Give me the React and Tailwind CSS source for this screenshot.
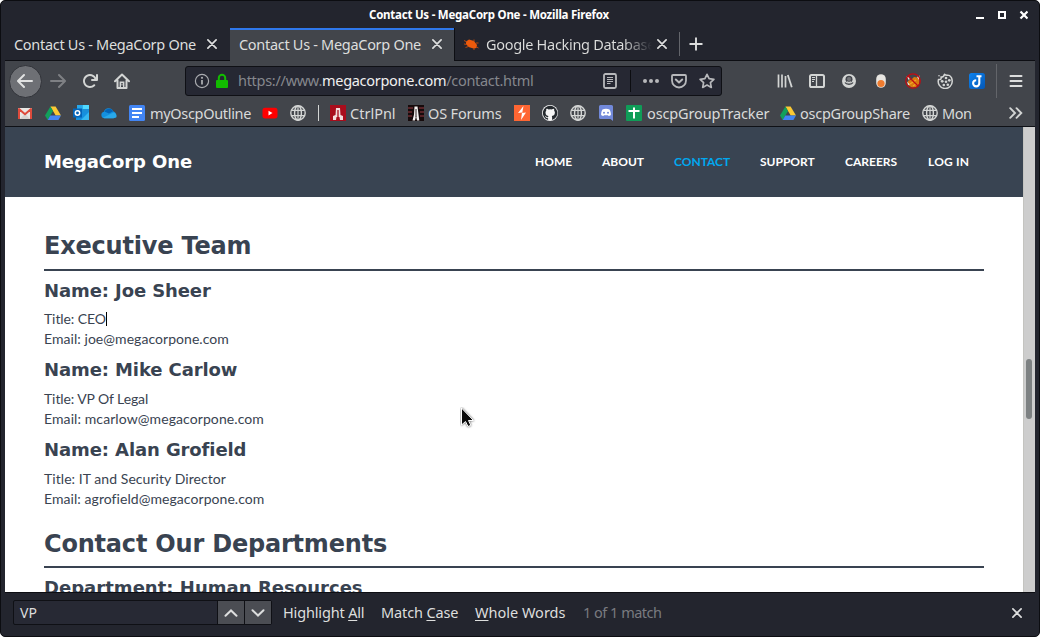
import React from "react";

const light = "#d3d5d4";

function Icon({ size = 16, className = "", children }) {
  return (
    <svg
      width={size}
      height={size}
      viewBox="0 0 16 16"
      fill="none"
      className={"block shrink-0 " + className}
    >
      {children}
    </svg>
  );
}

const BackArrow = ({ className }) => (
  <Icon className={className}>
    <path
      fill="currentColor"
      d="M15 7H3.414l4.293-4.293a1 1 0 0 0-1.414-1.414l-6 6a1 1 0 0 0 0 1.414l6 6a1 1 0 0 0 1.414-1.414L3.414 9H15a1 1 0 0 0 0-2z"
    />
  </Icon>
);

const Reload = () => (
  <Icon>
    <path
      fill={light}
      d="M15 1a1 1 0 0 0-1 1v2.418A6.995 6.995 0 1 0 8 15a6.954 6.954 0 0 0 4.95-2.05 1 1 0 0 0-1.414-1.414A5.019 5.019 0 1 1 12.549 6H10a1 1 0 0 0 0 2h5a1 1 0 0 0 1-1V2a1 1 0 0 0-1-1z"
    />
  </Icon>
);

const Home = () => (
  <Icon>
    <path d="M1 8.3 8 1.5l7 6.8M3.5 7.5V15h9V7.5" stroke={light} strokeWidth="2" strokeLinecap="round" strokeLinejoin="round" />
    <path d="M6.3 15V9.2h3.4V15" stroke={light} strokeWidth="1.4" />
    <path d="M8 10.5v2" stroke={light} strokeWidth="1" />
  </Icon>
);

const Close = ({ size = 10 }) => (
  <svg width={size} height={size} viewBox="0 0 10 10" className="block shrink-0">
    <path d="M.9.9l8.2 8.2M9.1.9.9 9.1" stroke="#dddede" strokeWidth="1.7" strokeLinecap="round" />
  </svg>
);

const Globe = () => (
  <Icon>
    <g stroke={light} strokeWidth="1.4">
      <circle cx="8" cy="8" r="7.2" />
      <ellipse cx="8" cy="8" rx="3.4" ry="7.2" />
      <path d="M1.5 5.4h13M1.5 10.6h13M8 1v14" strokeWidth="1.2" />
    </g>
  </Icon>
);

const Drive = () => (
  <Icon>
    <path d="M5.4 1.5h5.2L16 10.5h-5.3z" fill="#fbc934" />
    <path d="M5.4 1.5 8 6 2.7 15 0 10.5z" fill="#12a05c" />
    <path d="M5.3 10.5H16L13.4 15H2.7z" fill="#4285f4" />
  </Icon>
);

const Gmail = () => (
  <Icon>
    <path d="M1 3h14v11H1z" fill="#e9e7e4" />
    <path d="M2.8 14 8 8.8l5.2 5.2" fill="#d5d2cf" />
    <path d="M2 14V4l6 5.300L14 4v10" stroke="#de4b3c" strokeWidth="2" strokeLinejoin="round" />
  </Icon>
);

const Outlook = () => (
  <Icon>
    <path d="M4 0h12v9H4z" fill="#1a8fd8" />
    <path d="M9.5 0H16v4H9.5z" fill="#50d9ff" />
    <path d="M4 0h5.5v4H4z" fill="#28a8ea" />
    <path d="M3 7.5h13V15H3z" fill="#1590df" />
    <path d="m16 7-8 8h8z" fill="#35b8f1" />
    <path d="M0 3.5h9v9H0z" fill="#0364b8" />
    <circle cx="4.5" cy="8" r="2.2" stroke="#fff" strokeWidth="1.5" />
  </Icon>
);

const OneDrive = () => (
  <Icon>
    <path d="M3.4 13.3a3.3 3.3 0 0 1-.5-6.5A5 5 0 0 1 12.2 6.2 3.7 3.7 0 0 1 12.500 13.3z" fill="#1490df" />
    <path d="M3.4 6.6A5 5 0 0 1 12.2 6.2L8 8.5z" fill="#0364b8" />
    <path d="M2 12.8 12.5 7.5a3.5 3.5 0 0 1 2.7 5l-2.7.8H3.4z" fill="#28a8ea" />
  </Icon>
);

const Docs = () => (
  <Icon>
    <rect width="16" height="16" rx="1.5" fill="#4285f4" />
    <path d="M3 4h10M3 8h10M3 12h7" stroke="#fff" strokeWidth="1.8" />
  </Icon>
);

const YouTube = () => (
  <Icon>
    <rect x=".5" y="2.8" width="15" height="10.6" rx="2.6" fill="#f00" />
    <path d="m6.5 5.8 4 2.3-4 2.3z" fill="#fff" />
  </Icon>
);

const CtrlPnlIcon = () => (
  <Icon>
    <path d="M0 0h16v16H0z" fill="#a90d1c" />
    <path d="M6 3h4l.5 7 2.500 1v4h-3L9.500 12h-3L6 15H3v-4l2.500-1z" fill="#f3dcdc" />
    <path d="M8 5v7" stroke="#a90d1c" strokeWidth="1.300" />
  </Icon>
);

const ForumsIcon = () => (
  <Icon>
    <path d="M0 0h16v16H0z" fill="#160b0c" />
    <path d="M0 3h5M11 3h5M0 7h4M12 7h4M0 11h4M12 11h4" stroke="#572327" strokeWidth="2" />
    <path d="M6.5 1.500h3l1 8 .8 6H9L8 11l-1 4.500H4.500L6 9.500z" fill="#f5f3f2" />
    <path d="M8 4v8" stroke="#160b0c" strokeWidth=".9" />
  </Icon>
);

const Burp = () => (
  <Icon>
    <path d="M0 0h16v16H0z" fill="#ff6633" />
    <path d="M9.5 1 4 8h4.2zM7 15l5-7.5H8zM8 7.500h4L8 8H4z" fill="#fff" />
  </Icon>
);

const GitHub = () => (
  <Icon>
    <circle cx="8" cy="8" r="8" fill="#f6f6f6" />
    <path
      fill="#24292e"
      d="M8 .8a7.2 7.2 0 0 0-2.3 14c.4.1.5-.2.5-.4v-1.3c-2 .4-2.4-.9-2.4-.9-.3-.8-.8-1-.8-1-.7-.5 0-.5 0-.5.8.1 1.2.8 1.2.8.7 1.1 1.7.8 2.1.6.1-.5.3-.8.5-1-1.6-.2-3.3-.8-3.3-3.500 0-.8.3-1.4.8-1.9-.1-.2-.3-.9.1-1.9 0 0 .6-.2 2 .7a7 7 0 0 1 3.6 0c1.4-.9 2-.7 2-.7.4 1 .2 1.7.1 1.9.5.5.8 1.1.8 1.9 0 2.700-1.700 3.300-3.300 3.500.3.2.5.7.5 1.3v2c0 .2.1.5.5.4A7.2 7.2 0 0 0 8 .8z"
    />
    <path d="M5.2 4.5 7 5h2l1.8-.5.5 1.7.2 2c0 1.600-1.500 2.200-3.500 2.200s-3.500-.6-3.500-2.200l.2-2z" fill="#f6f6f6" />
    <path d="M6.5 10h3v5h-3z" fill="#f6f6f6" />
  </Icon>
);

const Discord = () => (
  <Icon>
    <path d="M2.5 0h11A1.500 1.500 0 0 1 15 1.500V16l-2.500-2h-10A1.500 1.500 0 0 1 1 12.500v-11A1.500 1.500 0 0 1 2.500 0z" fill="#7289da" />
    <path d="M4.5 4.500c2-1 5-1 7 0 1 1.500 1.500 3.500 1.400 5.500-.8.7-1.500 1-2.300 1l-.6-.8H6l-.6.8c-.8 0-1.500-.3-2.300-1 0-2 .4-4 1.400-5.500z" fill="#fff" />
    <circle cx="6" cy="7.700" r="1" fill="#7289da" />
    <circle cx="10" cy="7.700" r="1" fill="#7289da" />
  </Icon>
);

const Sheets = () => (
  <Icon>
    <rect width="16" height="16" rx="1" fill="#0f9d58" />
    <path d="M2.500 6h11M8 2.500v11" stroke="#fff" strokeWidth="2" />
  </Icon>
);

const Library = () => (
  <Icon>
    <path d="M1.500 1.500v13M5 1.500v13M8.500 3v11.500" stroke={light} strokeWidth="1.700" />
    <path d="m10.800 2 4 12.300" stroke={light} strokeWidth="1.800" />
  </Icon>
);

const Sidebar = () => (
  <Icon>
    <rect x="1" y="2" width="14" height="12" rx="1.600" stroke={light} strokeWidth="2" />
    <path d="M7.500 2v12" stroke={light} strokeWidth="1.300" />
    <path d="M3 4.500h3M3 6.500h3M3 8.500h2" stroke={light} strokeWidth="1" />
  </Icon>
);

const Account = () => (
  <Icon>
    <circle cx="8" cy="8" r="7" fill={light} />
    <circle cx="8" cy="6.200" r="3.500" fill="#42454b" />
    <circle cx="8" cy="6" r="2" fill={light} opacity=".35" />
    <path d="M4 9.500c1.200 2.300 6.800 2.300 8 0" stroke="#42454b" strokeWidth="1.300" />
    <path d="M5.800 8.700c1 1 3.400 1 4.400 0" stroke={light} strokeWidth="1.200" />
  </Icon>
);

const Pill = () => (
  <Icon>
    <rect x="3.200" y="1.200" width="9.600" height="13.600" rx="4.800" fill="#e7e5e1" />
    <circle cx="8" cy="10.500" r="3.600" fill="#ef7b2e" />
  </Icon>
);

const NoFox = () => (
  <Icon>
    <path d="M3 8 7 6l2-2 3 .5 2.500 2.500-.5 4-3 3-4 .5L3 12z" fill="#d97a10" />
    <path d="M1.500 3 5 4.500 4 7.500zM14.500 2.500 12 4l2 3zM2 8.500l3 3-2 .5z" fill="#efe3d4" />
    <path d="m5 11 6-4M8 13l3-2" stroke="#f2a526" strokeWidth="1.400" />
    <circle cx="8" cy="8" r="7.200" stroke="#c20b12" strokeWidth="1.300" />
    <path d="m3 3 10 10" stroke="#c20b12" strokeWidth="1.300" />
  </Icon>
);

const Cookie = () => (
  <Icon>
    <path d="M7.500 1.200C9 3 11 1.500 12.500 2.500c1.500 1 2.700 3.200 2.700 5.500A7 7 0 1 1 1.500 6.500c2.500.5 3-1 2.500-2.500 1.500.2 3-.8 3.500-2.800z" stroke={light} strokeWidth="1.500" strokeLinejoin="round" />
    <g fill={light}>
      <circle cx="9" cy="5" r="1.300" />
      <circle cx="5.200" cy="8.300" r="1.400" />
      <circle cx="9" cy="8.800" r="1.300" />
      <circle cx="6.800" cy="12" r="1.300" />
      <circle cx="10.800" cy="11.800" r="1.300" />
      <circle cx="12.300" cy="7.300" r="1.400" />
      <circle cx="2" cy="2.800" r=".8" />
    </g>
  </Icon>
);

const Joplin = () => (
  <Icon>
    <defs>
      <linearGradient id="joplin" x1="0" y1="0" x2="1" y2="1">
        <stop offset="0" stopColor="#0d82ee" />
        <stop offset="1" stopColor="#0457b5" />
      </linearGradient>
    </defs>
    <rect width="16" height="16" rx="2.500" fill="url(#joplin)" />
    <path d="M7.500 3.200h5M10.300 3v7.300a3.100 3.100 0 1 1-3.100-3.100" stroke="#fff" strokeWidth="2.100" />
  </Icon>
);

const Menu = () => (
  <Icon>
    <path d="M2.500 3h11M2.500 8h11M2.500 13h11" stroke="#dcdddd" strokeWidth="2" strokeLinecap="round" />
  </Icon>
);

const InfoIcon = () => (
  <Icon>
    <circle cx="8" cy="8" r="6.600" stroke="#a9abaf" strokeWidth="1.200" />
    <path d="M8 7v4.500" stroke="#a9abaf" strokeWidth="1.800" />
    <circle cx="8" cy="4.800" r="1.100" fill="#a9abaf" />
  </Icon>
);

const Lock = () => (
  <Icon>
    <rect x="2" y="7" width="12" height="8" rx="1" fill="#12bc00" />
    <path d="M4.800 8V5a3.200 3.200 0 0 1 6.400 0v3" stroke="#12bc00" strokeWidth="2" />
  </Icon>
);

const Reader = () => (
  <Icon>
    <rect x="2" y="1" width="12" height="14" rx="1.500" stroke="#b7b8bb" strokeWidth="1.800" />
    <path d="M5 4.500h6M5 6.500h6M5 8.500h6M5 10.500h3.500" stroke="#b7b8bb" strokeWidth="1" />
  </Icon>
);

const Dots = () => (
  <Icon>
    <g fill="#b7b8bb">
      <circle cx="2" cy="8" r="2" />
      <circle cx="8" cy="8" r="2" />
      <circle cx="14" cy="8" r="2" />
    </g>
  </Icon>
);

const Pocket = () => (
  <Icon>
    <path d="M2 2h12a1 1 0 0 1 1 1v4.500a7 7 0 0 1-14 0V3a1 1 0 0 1 1-1z" stroke="#b7b8bb" strokeWidth="1.800" />
    <path d="M4.800 6.500 8 9.500l3.200-3" stroke="#b7b8bb" strokeWidth="2" strokeLinecap="round" strokeLinejoin="round" />
  </Icon>
);

const Star = () => (
  <Icon>
    <path
      d="m8 1.300 2.100 4.400 4.800.6-3.500 3.300.9 4.800L8 12.100l-4.300 2.300.9-4.800L1.100 6.300l4.800-.6z"
      stroke="#b7b8bb"
      strokeWidth="1.700"
      strokeLinejoin="round"
    />
  </Icon>
);

const Bug = () => (
  <Icon>
    <path d="M3 5.500 6 3.500 11 5l3 4-.5 3-3 .5-5-1.500L3 8z" fill="#ec5a0c" />
    <path d="M1 4.500 4 6M1 8l3 .5M2.500 11.500l3-1M11 3.500v2M13 7h2.500M11 14v-2M13 10.500l2.500 1.500" stroke="#b8480f" strokeWidth="1" />
  </Icon>
);

const Chevron = ({ down }) => (
  <svg width="14" height="8" viewBox="0 0 14 8" fill="none" className="block">
    <path d={down ? "m1.500 1.200 5.500 5.300 5.500-5.300" : "m1.500 6.800 5.500-5.300 5.500 5.300"} stroke="#dcdddd" strokeWidth="2" strokeLinecap="round" />
  </svg>
);

const Overflow = () => (
  <svg width="14" height="12" viewBox="0 0 14 12" fill="none" className="block">
    <path d="m1.200 1.200 4.800 4.800-4.800 4.800M7.500 1.200l4.800 4.800-4.800 4.800" stroke={light} strokeWidth="1.900" strokeLinecap="round" />
  </svg>
);

function Cell({ w, children }) {
  return <div className={"flex h-full shrink-0 items-center justify-center " + w}>{children}</div>;
}

function Label({ w, children }) {
  return <span className={"block shrink-0 whitespace-nowrap " + w}>{children}</span>;
}

function TitleBar() {
  return (
    <div className="flex h-[27px] shrink-0 items-center text-[11.500px] font-bold text-white">
      <div className="w-[364px] shrink-0" />
      <Label w="w-[605px] text-[11.5px] leading-[26px] tracking-[-0.24px]">Contact Us - MegaCorp One - Mozilla Firefox</Label>
      <svg width="54" height="10" viewBox="0 0 54 10" fill="none" className="block shrink-0" stroke="#fff">
        <path d="M2 8h8" strokeWidth="2" />
        <path d="M25 2h6v6h-6z" strokeWidth="2" />
        <path d="m46.500 1.500 7 7m0-7-7 7" strokeWidth="2.200" />
      </svg>
    </div>
  );
}

function TabBar() {
  return (
    <div className="flex h-[33px] shrink-0 items-start text-[14.5px] leading-[32px] tracking-[-0.3px] text-[#dddedd]">
      <div className="flex h-[33px] w-[225px] shrink-0 items-center border-b border-[#0d0e13] pl-[9px]">
        <Label w="w-[193px]">Contact Us - MegaCorp One</Label>
        <Close />
      </div>
      <div className="flex h-[33px] w-[224px] shrink-0 items-center border-t-2 border-[#2f78ec] bg-[#42454b] pb-[3px] pl-[9px]">
        <Label w="w-[193px]">Contact Us - MegaCorp One</Label>
        <Close />
      </div>
      <div className="flex h-[33px] grow items-center border-b border-l border-[#0d0e13] pl-[8px]">
        <Bug />
        <div className="ml-[7px] w-[171px] shrink-0 overflow-hidden whitespace-nowrap bg-linear-to-r from-[#dddedd] from-[80%] to-transparent to-[97%] bg-clip-text text-transparent">
          Google Hacking Database
        </div>
        <Close />
        <div className="ml-[12px] h-6 w-px shrink-0 bg-[#63656b]" />
        <svg width="14" height="14" viewBox="0 0 14 14" className="ml-[9px] block shrink-0">
          <path d="M7 .5v13M.5 7h13" stroke="#dddede" strokeWidth="1.900" />
        </svg>
      </div>
    </div>
  );
}

function NavBar() {
  return (
    <div className="flex h-[40px] shrink-0 items-center bg-[#42454b]">
      <div className="ml-1 flex size-[33px] shrink-0 items-center justify-center rounded-full border border-[#313339] bg-[#6e7075] pr-px pb-px text-[#e1e2e2]">
        <BackArrow />
      </div>
      <Cell w="w-8">
        <BackArrow className="rotate-180 text-[#7e8084]" />
      </Cell>
      <Cell w="w-8">
        <Reload />
      </Cell>
      <Cell w="w-8">
        <Home />
      </Cell>
      <div className="ml-[47px] flex h-[30px] w-[537px] shrink-0 items-center rounded-[3px] border border-[#0f1015] bg-[#262833] pl-[8px]">
        <InfoIcon />
        <div className="w-1 shrink-0" />
        <Lock />
        <div className="ml-[8px] w-[364px] shrink-0 whitespace-nowrap text-[14.5px] tracking-[-0.29px] text-[#85878d]">
          https://www.<span className="text-[#f0f0f0]">megacorpone.com</span>/contact.html
        </div>
        <Reader />
        <div className="ml-[12px] h-[22px] w-px shrink-0 bg-[#0c0d11]" />
        <div className="w-[12px] shrink-0" />
        <Dots />
        <div className="w-[12px] shrink-0" />
        <Pocket />
        <div className="w-[12px] shrink-0" />
        <Star />
      </div>
      <div className="w-[47px] shrink-0" />
      <Cell w="w-8"><Library /></Cell>
      <Cell w="w-8"><Sidebar /></Cell>
      <Cell w="w-8"><Account /></Cell>
      <Cell w="w-8"><Pill /></Cell>
      <Cell w="w-8"><NoFox /></Cell>
      <Cell w="w-8"><Cookie /></Cell>
      <Cell w="w-8"><Joplin /></Cell>
      <div className="ml-[3px] h-[34px] w-px shrink-0 bg-[#63656a]" />
      <Cell w="w-[38px]"><Menu /></Cell>
    </div>
  );
}

function Bookmarks() {
  return (
    <div className="flex h-[26px] shrink-0 items-center border-b border-[#0f1116] bg-[#42454b] pb-px pl-[6px] text-[14.5px] leading-[24px] text-[#d9dada]">
      <Cell w="w-7"><Gmail /></Cell>
      <Cell w="w-7"><Drive /></Cell>
      <Cell w="w-7"><Outlook /></Cell>
      <Cell w="w-7"><OneDrive /></Cell>
      <Cell w="w-[27px]"><Docs /></Cell>
      <Label w="w-[106px] tracking-[-0.32px]">myOscpOutline</Label>
      <Cell w="w-7"><YouTube /></Cell>
      <Cell w="w-7"><Globe /></Cell>
      <div className="ml-[6px] h-4 w-px shrink-0 bg-[#d3d5d4]" />
      <Cell w="w-[7px]" />
      <Cell w="w-[24px]"><CtrlPnlIcon /></Cell>
      <Label w="w-[54px]">CtrlPnl</Label>
      <Cell w="w-[24px]"><ForumsIcon /></Cell>
      <Label w="w-[80px] tracking-[-0.15px]">OS Forums</Label>
      <Cell w="w-7"><Burp /></Cell>
      <Cell w="w-7"><GitHub /></Cell>
      <Cell w="w-7"><Globe /></Cell>
      <Cell w="w-7"><Discord /></Cell>
      <Cell w="w-[27px]"><Sheets /></Cell>
      <Label w="w-[129px] tracking-[-0.14px]">oscpGroupTracker</Label>
      <Cell w="w-[24px]"><Drive /></Cell>
      <Label w="w-[118px] tracking-[-0.25px]">oscpGroupShare</Label>
      <Cell w="w-[24px]"><Globe /></Cell>
      <Label w="w-[67px] tracking-[-0.5px]">Mon</Label>
      <Overflow />
    </div>
  );
}

const navItems = [
  ["HOME", "w-[67px]"],
  ["ABOUT", "w-[72px]"],
  ["CONTACT", "w-[86px] text-[#00a8f0]"],
  ["SUPPORT", "w-[85px]"],
  ["CAREERS", "w-[83px]"],
  ["LOG IN", "w-[95px] tracking-[0.2px]"],
];

const team = [
  { name: "Joe Sheer", title: "CEO", email: "joe@megacorpone.com", head: "h-[38px] leading-[40px]", t: "tracking-[-0.1px]", e: "tracking-[0.05px]", caret: true },
  { name: "Mike Carlow", title: "VP Of Legal", email: "mcarlow@megacorpone.com", head: "h-[40px] leading-[42px]", t: "tracking-[-0.1px]", e: "tracking-[0.09px]" },
  { name: "Alan Grofield", title: "IT and Security Director", email: "agrofield@megacorpone.com", head: "h-[40px] leading-[42px]", t: "tracking-[0.06px]", e: "tracking-[0.06px]" },
];

function Page() {
  return (
    <div className="relative flex h-[465px] shrink-0 overflow-hidden bg-white">
      <div className="w-[1018px] shrink-0 text-[#394351]">
        <header className="flex h-[70px] items-center bg-[#394452] pl-[39px] text-white">
          <div className="w-[491px] shrink-0 pb-[2px] font-['DejaVu_Sans',sans-serif] text-[18px] font-bold tracking-[-0.08px]">MegaCorp One</div>
          <nav className="flex font-[Lato,sans-serif] text-[12px] font-bold">
            {navItems.map(([t, w]) => (
              <Label key={t} w={w}>{t}</Label>
            ))}
          </nav>
        </header>
        <main className="ml-[39px] w-[940px] font-[Lato,sans-serif] text-[14px] leading-[20px]">
          <h2 className="h-[74px] border-b-2 border-[#394351] pt-[25px] font-['DejaVu_Sans',sans-serif] text-[24px] leading-[48px] font-bold tracking-[-0.2px]">
            Executive Team
          </h2>
          {team.map((m) => (
            <section key={m.name}>
              <h3 className={"font-['DejaVu_Sans',sans-serif] text-[18px] font-bold tracking-[-0.1px] " + m.head}>Name: {m.name}</h3>
              <p className={"flex items-center " + m.t}>
                Title: {m.title}
                {m.caret && <span className="h-[14px] w-px bg-black" />}
              </p>
              <p className={m.e}>Email: {m.email}</p>
            </section>
          ))}
          <h2 className="h-[59px] border-b-2 border-[#394351] pt-[11px] font-['DejaVu_Sans',sans-serif] text-[24px] leading-[48px] font-bold tracking-[-0.2px]">
            Contact Our Departments
          </h2>
          <h3 className="font-['DejaVu_Sans',sans-serif] text-[18px] leading-[40px] font-bold tracking-[0.03px]">Department: Human Resources</h3>
        </main>
      </div>
      <div className="w-[12px] shrink-0 border-l border-[#c4c4c0] bg-[#cdcdcd] pt-[232px] pl-[2px]">
        <div className="h-[60px] w-[6px] rounded-full bg-[#7d8182]" />
      </div>
      <svg width="16" height="22" viewBox="0 0 16 22" className="absolute left-[455px] top-[280px]">
        <path
          d="M1.500 1v17l4-3.500 2.500 5 2.800-1.200-2.300-4.800h5z"
          fill="#0b0b0b"
          stroke="#fff"
          strokeWidth="1"
          className="drop-shadow-[0_0_1px_#555]"
        />
      </svg>
    </div>
  );
}

function FindBar() {
  return (
    <div className="flex h-[44px] shrink-0 items-center border-t border-[#0d0e13] pb-[4px] pl-[8px] text-[14.5px] text-[#dddedd]">
      <div className="flex h-[25px] w-[259px] shrink-0 items-center rounded-[2px] border border-[#0f1015] bg-[#272934]">
        <Label w="w-[203px] pl-[6px] text-[14px]">VP</Label>
        <div className="flex h-full w-[27px] shrink-0 items-center justify-center border-l border-[#0f1015] bg-[#4b4d53]"><Chevron /></div>
        <div className="flex h-full w-[27px] shrink-0 items-center justify-center border-l border-[#0f1015] bg-[#4b4d53]"><Chevron down /></div>
      </div>
      <Label w="ml-[11px] w-[98px] tracking-[-0.16px]">Highlight <u className="underline-offset-2">A</u>ll</Label>
      <Label w="w-[94px] tracking-[-0.13px]">Match <u className="underline-offset-2">C</u>ase</Label>
      <Label w="w-[108px]"><u className="underline-offset-2">W</u>hole Words</Label>
      <Label w="w-[429px] tracking-[-0.5px] text-[#797b80]">1 of 1 match</Label>
      <Close />
    </div>
  );
}

export default function App() {
  return (
    <div className="h-[637px] w-[1040px] overflow-hidden bg-white">
      <div className="flex h-[637px] w-[1040px] flex-col overflow-hidden rounded-[5px] border border-[#0c0d11] bg-[#23252e] px-[4px] font-['Noto_Sans',sans-serif]">
        <TitleBar />
        <TabBar />
        <NavBar />
        <Bookmarks />
        <Page />
        <FindBar />
      </div>
    </div>
  );
}
